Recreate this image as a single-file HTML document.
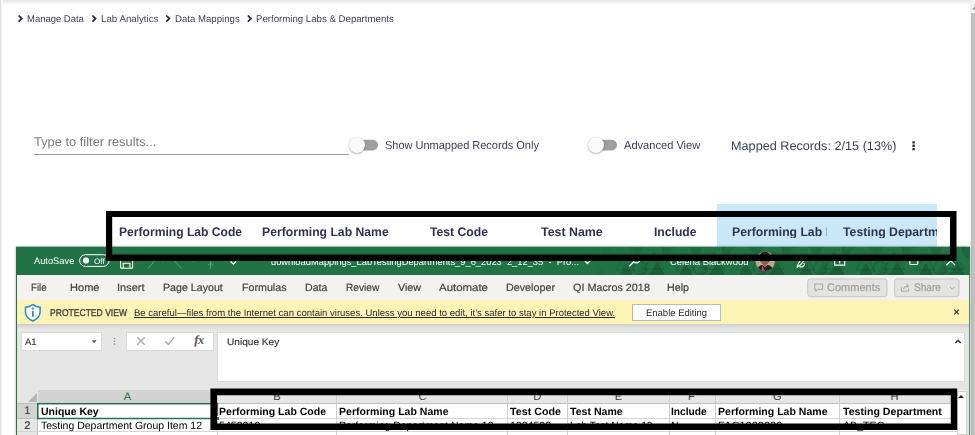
<!DOCTYPE html>
<html lang="en"><head><meta charset="utf-8"><title>Performing Labs &amp; Departments</title>
<style>
*{margin:0;padding:0;box-sizing:border-box}
html,body{width:975px;height:435px;overflow:hidden;background:#fff}
body{position:relative;font-family:"Liberation Sans",sans-serif}
.a{position:absolute}
.t{position:absolute;white-space:pre;transform-origin:0 50%;text-rendering:geometricPrecision;font-family:"Liberation Sans",sans-serif}
svg{position:absolute;overflow:visible}

</style></head>
<body>
<!-- page chrome -->
<div class="a" style="left:0;top:0;width:975px;height:5px;background:linear-gradient(#e4e4e4,#f3f3f3 50%,#fff)"></div>
<div class="a" style="left:0;top:0;width:1px;height:435px;background:#e1e1e1"></div>
<div class="a" style="left:1px;top:0;width:2px;height:435px;background:linear-gradient(90deg,#efefef,#fff)"></div>
<!-- browser scrollbar -->
<div class="a" style="left:970px;top:0;width:5px;height:435px;background:#f1f1f1"></div>
<div class="a" style="left:971px;top:13px;width:4px;height:422px;background:#c1c1c1"></div>
<svg style="left:972px;top:5.500px" width="3" height="4" viewBox="0 0 3 4"><path d="M0 3.500 L3 .5 L3 3.500Z" fill="#8a8a8a"/></svg>

<!-- breadcrumb chevrons -->
<svg style="left:0;top:0" width="400" height="30" viewBox="0 0 400 30" fill="none" stroke="#1f2347" stroke-width="1.7">
  <path d="M18.6 15.500 L21.8 18.600 L18.6 21.700"/>
  <path d="M92.4 15.500 L95.6 18.600 L92.4 21.700"/>
  <path d="M166.2 15.500 L169.4 18.600 L166.2 21.700"/>
  <path d="M247.8 15.500 L251.0 18.600 L247.8 21.700"/>
</svg>

<!-- filter input underline -->
<div class="a" style="left:33.5px;top:154px;width:315.5px;height:1px;background:#9b9b9b"></div>

<!-- toggle 1 -->
<svg style="left:0;top:0" width="975" height="160" viewBox="0 0 975 160"><rect x="355" y="139.800" width="23" height="10.600" rx="5.300" fill="#9e9e9e"/><rect x="594" y="139.800" width="23" height="10.600" rx="5.300" fill="#9e9e9e"/></svg>
<div class="a" style="left:349px;top:137px;width:16px;height:16px;border-radius:50%;background:#fafafa;box-shadow:0 1px 2px rgba(0,0,0,.28),0 0 1px rgba(0,0,0,.18)"></div>
<!-- toggle 2 -->

<div class="a" style="left:588px;top:137px;width:16px;height:16px;border-radius:50%;background:#fafafa;box-shadow:0 1px 2px rgba(0,0,0,.28),0 0 1px rgba(0,0,0,.18)"></div>
<!-- kebab -->
<svg style="left:910px;top:138.600px" width="8" height="14" viewBox="0 0 8 14" fill="#1f2347"><rect x="2.400" y="2.200" width="2.400" height="2.400" rx=".5"/><rect x="2.400" y="5.550" width="2.400" height="2.400" rx=".5"/><rect x="2.400" y="8.900" width="2.400" height="2.400" rx=".5"/></svg>

<!-- selected (light blue) columns -->
<div class="a" style="left:716.5px;top:204px;width:220.5px;height:44px;background:#cbe8f9"></div>

<!-- ================= EXCEL WINDOW ================= -->
<div class="a" style="left:16px;top:246px;width:954px;height:1px;background:rgba(33,115,70,.3)"></div>
<div class="a" style="left:16px;top:247px;width:954px;height:188px;box-shadow:0 0 3px rgba(0,0,0,.3)"></div>
<div class="a" id="xl" style="left:16px;top:247px;width:954px;height:188px;background:#e6e6e6;overflow:hidden">
  <!-- title bar -->
  <div class="a" style="left:0;top:0;width:954px;height:28px;background:#217346"></div>
  <svg style="left:540px;top:0" width="414" height="28" viewBox="0 0 414 28">
    <defs>
      <pattern id="tri" width="60" height="28" patternUnits="userSpaceOnUse">
        <path d="M3 28 L10 16 L17 28Z M33 28 L41 14 L49 28Z" fill="#000" fill-opacity=".17"/>
        <path d="M13 0 L27 0 L20 12Z M45 0 L58 0 L51.500 11Z M20 28 L27 16 L34 28Z" fill="#000" fill-opacity=".08"/>
        <path d="M0 23 L9 7 L18 23Z M28 22 L38 5 L48 22Z" fill="none" stroke="#000" stroke-opacity=".1" stroke-width="1.500"/>
        <circle cx="24" cy="21" r="6.500" fill="none" stroke="#000" stroke-opacity=".09" stroke-width="1.500"/>
        <circle cx="54" cy="4" r="7" fill="none" stroke="#000" stroke-opacity=".09" stroke-width="1.500"/>
      </pattern>
      <linearGradient id="fd" x1="0" x2="1"><stop offset="0" stop-color="#fff" stop-opacity="0"/><stop offset=".08" stop-color="#fff" stop-opacity="0"/><stop offset=".2" stop-color="#fff" stop-opacity="1"/><stop offset="1" stop-color="#fff" stop-opacity="1"/></linearGradient>
      <mask id="mk"><rect width="414" height="28" fill="url(#fd)"/></mask>
    </defs>
    <rect width="414" height="28" fill="url(#tri)" mask="url(#mk)"/>
  </svg>
  <!-- ribbon tab strip -->
  <div class="a" style="left:0;top:28px;width:954px;height:25px;background:#f3f2f1"></div>
  <!-- comments / share buttons -->
  <svg style="left:0;top:0" width="954" height="60" viewBox="0 0 954 60"><rect x="791.800" y="31.900" width="79.200" height="17.800" rx="2.500" fill="#e4e3e1" stroke="#c6c5c3" stroke-width="1"/><rect x="878.700" y="31.900" width="64.300" height="17.800" rx="2.500" fill="#e4e3e1" stroke="#c6c5c3" stroke-width="1"/></svg>
  
  <!-- protected view bar -->
  <div class="a" style="left:0;top:53px;width:954px;height:23.500px;background:#fcf4b4"></div>
  <div class="a" style="left:0;top:76.500px;width:954px;height:5px;background:linear-gradient(#cdcdcd,#e6e6e6)"></div>
  <div class="a" style="left:616.3px;top:57px;width:89.2px;height:16.6px;background:#fff;border:1px solid #b9b9b9"></div>
  <!-- name box -->
  <div class="a" style="left:5px;top:84.5px;width:81px;height:19px;background:#fff;border:1px solid #d9d9d9"></div>
  <!-- fx box -->
  <div class="a" style="left:110.300px;top:84.500px;width:88.200px;height:19px;background:#fff;border:1px solid #d9d9d9"></div>
  <!-- formula box -->
  <div class="a" style="left:200.800px;top:84.500px;width:748.300px;height:50.500px;background:#fff;border:1px solid #dcdcdc"></div>
  <!-- grid -->
  <div class="a" style="left:0;top:143px;width:942px;height:45px;background:#fff"></div>
  <!-- column header strip -->
  <div class="a" style="left:0;top:143px;width:942px;height:14px;background:#e6e6e6;border-bottom:1px solid #bdbdbd"></div>
  <div class="a" style="left:21.7px;top:143px;width:179.3px;height:14px;background:#d3d3d3;border-bottom:1px solid #1e6b41"></div>
  <!-- row headers -->
  <div class="a" style="left:0;top:157px;width:21.7px;height:31px;background:#e6e6e6;border-right:1px solid #bdbdbd"></div>
  <div class="a" style="left:0;top:157px;width:21.7px;height:14.5px;background:#d3d3d3;border-right:1px solid #1e6b41"></div>
  <!-- select-all triangle -->
  <svg style="left:11px;top:146px" width="10" height="9" viewBox="0 0 10 9"><path d="M10 0 L10 9 L1 9Z" fill="#b5b5b5"/></svg>
  <!-- grid lines: horizontal -->
  <div class="a" style="left:21.7px;top:171px;width:920px;height:1px;background:#d4d4d4"></div>
  <div class="a" style="left:0;top:171px;width:21.7px;height:1px;background:#bdbdbd"></div>
  <div class="a" style="left:0;top:184px;width:942px;height:1px;background:#d4d4d4"></div>
  <!-- vertical lines (col boundaries) -->
  <div class="a" style="left:320.4px;top:143.5px;width:1px;height:45px;background:#cfcfcf"></div>
  <div class="a" style="left:491.4px;top:143.5px;width:1px;height:45px;background:#cfcfcf"></div>
  <div class="a" style="left:551.3px;top:143.5px;width:1px;height:45px;background:#cfcfcf"></div>
  <div class="a" style="left:652.5px;top:143.5px;width:1px;height:45px;background:#cfcfcf"></div>
  <div class="a" style="left:699.2px;top:143.5px;width:1px;height:45px;background:#cfcfcf"></div>
  <div class="a" style="left:823.4px;top:143.5px;width:1px;height:45px;background:#cfcfcf"></div>
  <div class="a" style="left:201px;top:171px;width:1px;height:18px;background:#cfcfcf"></div>
  <!-- selected cell A1 -->
  <svg style="left:0;top:0" width="300" height="188" viewBox="0 0 300 188"><rect x="21.800" y="156.700" width="179.600" height="14.800" fill="none" stroke="#21744a" stroke-width="1.500"/></svg>
  <div class="a" style="left:199px;top:169px;width:5px;height:5px;background:#1e6b41;border:1px solid #fff"></div>
  <!-- excel vertical scrollbar -->
  <div class="a" style="left:941.200px;top:143px;width:9.400px;height:45px;background:#f4f4f4"></div><div class="a" style="left:941px;top:144px;width:10px;height:13px;background:#fff;border:1px solid #cfcfcf"></div>
  <div class="a" style="left:941px;top:156px;width:10px;height:32px;background:#fff;border:1px solid #cfcfcf;border-top:0"></div>
  <svg style="left:942.400px;top:148px" width="6" height="3" viewBox="0 0 6 3"><path d="M0 3 L3 0 L6 3Z" fill="#222"/></svg>
  <!-- window borders -->
  <div class="a" style="left:0;top:28px;width:1px;height:160px;background:#217346"></div>
  <div class="a" style="left:953px;top:28px;width:1px;height:160px;background:#4b9068"></div>
</div>

<!-- excel icons layer (page coords) -->
<svg style="left:0;top:0" width="975" height="435" viewBox="0 0 975 435" fill="none">
  <!-- autosave pill -->
  <rect x="79.6" y="254.7" width="29.5" height="11.7" rx="5.85" stroke="#fff" stroke-width="1"/>
  <circle cx="86" cy="260.5" r="3.1" fill="#fff"/>
  <!-- save icon -->
  <path d="M120.600 256 h10 l2 2 v9.200 q0 1 -1 1 h-10 q-1 0 -1 -1z M123.300 268.200 v-5 h6.600 v5" stroke="#fff" stroke-width="1.100"/>
  <!-- faded undo/redo -->
  <path d="M148 268.700 L154.800 260.500 M173.800 260.500 L182 268.700 M210.600 260 V268.700 M208 265.600 l2.600 -2.600 l2.600 2.600" stroke="#5da47e" stroke-width="1"/><circle cx="163" cy="261.300" r=".6" fill="#5da47e"/><circle cx="194" cy="261.300" r=".6" fill="#5da47e"/>
  <!-- qat chevron -->
  <path d="M230.500 261.300 l2.800 2.800 l2.800 -2.800" stroke="#fff" stroke-width="1.300"/>
  <!-- title chevron -->
  <path d="M584.6 260.6 l2.9 2.9 l2.9 -2.9" stroke="#fff" stroke-width="1.3"/>
  <!-- search -->
  <circle cx="636.3" cy="259.3" r="3.6" stroke="#fff" stroke-width="1.1"/><path d="M633.6 262 l-4.4 4.4" stroke="#fff" stroke-width="1.2"/>
  <!-- avatar -->
  <clipPath id="av"><circle cx="765.200" cy="261.300" r="9.700"/></clipPath>
  <g clip-path="url(#av)">
    <rect x="755" y="251" width="21" height="21" fill="#b9a88a"/>
    <ellipse cx="765" cy="257.500" rx="5.600" ry="6" fill="#2b1f1e"/>
    <ellipse cx="765" cy="260.600" rx="3.600" ry="4.300" fill="#8d5d47"/>
    <path d="M756.500 272 q1 -6.500 6 -7 l2.500 2.500 l2.500 -2.500 q5 .5 6.500 7z" fill="#231c22"/>
    <path d="M762.300 265.600 l2.700 5.400 l-4 1.500z" fill="#e0337f"/>
    <path d="M763 265 l2 2.300 l2 -2.300z" fill="#8d5d47"/>
  </g>
  <!-- pen -->
  <path d="M797.200 267.200 q.5 -4.500 6 -9.500 l2.800 -1.200 l-.9 2.900 q-4 5.500 -7.900 7.800z M799.500 266.500 q2.500 1.500 4.500 -1.200 q1.200 -1.500 -.5 -1.800" stroke="#fff" stroke-width="1.100"/>
  <!-- ribbon display -->
  <path d="M834.700 256.500 h10 v8.600 h-10z M834.700 260.500 h10 M839.700 258 v5.500" stroke="#fff" stroke-width="1.100"/>
  <!-- maximize -->
  <rect x="909.800" y="256" width="8" height="8.500" rx="1" stroke="#fff" stroke-width="1.100"/>
  <!-- close -->
  <path d="M946.200 256.300 l9 9 M955.200 256.300 l-9 9" stroke="#fff" stroke-width="1.200"/>
  <!-- comments icon -->
  <path d="M814.800 284 h7.800 v5.300 h-4.800 l-2 2 v-2 h-1z" stroke="#a6a4a2" stroke-width="1"/>
  <!-- share icon -->
  <path d="M901.300 287.300 v3.800 h7.400 v-2.200 M903.300 289.300 q.4 -3.300 4.600 -3.300 M906.300 283.700 l2.300 2.300 l-2.300 2.300" stroke="#a6a4a2" stroke-width="1"/>
  <path d="M950 287 l2.300 2.300 l2.300 -2.300" stroke="#a9a9a9" stroke-width="1"/>
  <!-- shield -->
  <path d="M32.800 304.600 q-3.600 2.400 -7.300 2.700 v5 q.3 5.800 7.300 8.700 q7 -2.900 7.300 -8.700 v-5 q-3.700 -.3 -7.300 -2.700z" stroke="#2b88d8" stroke-width="1.500" fill="#fff"/>
  <circle cx="32.800" cy="308.600" r="1.100" fill="#2b88d8"/><rect x="31.900" y="310.800" width="1.800" height="6" fill="#2b88d8"/>
  <!-- bar close x -->
  <path d="M954.200 309.700 l4.600 4.600 M958.800 309.700 l-4.600 4.600" stroke="#333" stroke-width="1.200"/>
  <!-- name box dropdown -->
  <path d="M91.600 340.300 h5 l-2.500 2.800z" fill="#555"/>
  <!-- splitter dots -->
  <circle cx="114.500" cy="338.500" r=".8" fill="#8c8c8c"/><circle cx="114.500" cy="341.300" r=".8" fill="#8c8c8c"/><circle cx="114.500" cy="344.100" r=".8" fill="#8c8c8c"/>
  <!-- cancel / enter -->
  <path d="M137.300 337.300 l7.400 7.400 M144.700 337.300 l-7.400 7.400" stroke="#a8a8a8" stroke-width="1.300"/>
  <path d="M165.300 341.300 l3 3.200 l6 -7.300" stroke="#a8a8a8" stroke-width="1.300"/>
  <!-- formula expand caret -->
  <path d="M955.300 343 l2.700 -2.800 l2.700 2.800" stroke="#333" stroke-width="1.400"/>
</svg>
<span class="a" style="left:194.200px;top:333px;font:italic 700 12.500px/14px 'Liberation Serif',serif;color:#555;letter-spacing:-.4px;text-rendering:geometricPrecision">fx</span>

<span class="t" style="left:27.30px;top:15px;font-size:9.7px;line-height:9.7px;font-weight:400;color:#3a3e62;transform:scaleX(0.9781);">Manage Data</span>
<span class="t" style="left:101.10px;top:15px;font-size:9.7px;line-height:9.7px;font-weight:400;color:#3a3e62;transform:scaleX(1.0054);">Lab Analytics</span>
<span class="t" style="left:175.00px;top:15px;font-size:9.7px;line-height:9.7px;font-weight:400;color:#3a3e62;transform:scaleX(0.9928);">Data Mappings</span>
<span class="t" style="left:256.40px;top:15px;font-size:9.7px;line-height:9.7px;font-weight:400;color:#3a3e62;transform:scaleX(0.9957);">Performing Labs &amp; Departments</span>
<span class="t" style="left:34.20px;top:136px;font-size:12.6px;line-height:12.6px;font-weight:400;color:#7b7b7b;transform:scaleX(1.0218);">Type to filter results...</span>
<span class="t" style="left:385.10px;top:141px;font-size:11.5px;line-height:11.5px;font-weight:400;color:#3a3e62;transform:scaleX(0.9553);">Show Unmapped Records Only</span>
<span class="t" style="left:623.80px;top:141px;font-size:11.5px;line-height:11.5px;font-weight:400;color:#3a3e62;transform:scaleX(0.9638);">Advanced View</span>
<span class="t" style="left:730.60px;top:140px;font-size:12.5px;line-height:12.5px;font-weight:400;color:#3a3e62;transform:scaleX(1.0130);">Mapped Records: 2/15 (13%)</span>
<span class="t" style="left:118.70px;top:226px;font-size:12.4px;line-height:12.4px;font-weight:700;color:#2d3154;transform:scaleX(0.9763);">Performing Lab Code</span>
<span class="t" style="left:261.80px;top:226px;font-size:12.4px;line-height:12.4px;font-weight:700;color:#2d3154;transform:scaleX(0.9840);">Performing Lab Name</span>
<span class="t" style="left:430.30px;top:226px;font-size:12.4px;line-height:12.4px;font-weight:700;color:#2d3154;transform:scaleX(0.9833);">Test Code</span>
<span class="t" style="left:541.00px;top:226px;font-size:12.4px;line-height:12.4px;font-weight:700;color:#2d3154;transform:scaleX(0.9992);">Test Name</span>
<span class="t" style="left:654.00px;top:226px;font-size:12.4px;line-height:12.4px;font-weight:700;color:#2d3154;transform:scaleX(0.9798);">Include</span>
<span class="t" style="left:731.70px;top:226px;font-size:12.4px;line-height:12.4px;font-weight:700;color:#2d3154;transform:scaleX(0.9840);width:96.24px;overflow:hidden;">Performing Lab Name</span>
<span class="t" style="left:842.50px;top:226px;font-size:12.4px;line-height:12.4px;font-weight:700;color:#2d3154;transform:scaleX(0.9901);width:95.44px;overflow:hidden;">Testing Department</span>
<span class="t" style="left:33.70px;top:257px;font-size:9.5px;line-height:9.5px;font-weight:400;color:#ffffff;transform:scaleX(0.9781);">AutoSave</span>
<span class="t" style="left:94.30px;top:258px;font-size:8px;line-height:8px;font-weight:400;color:#ffffff;transform:scaleX(1.0160);">Off</span>
<span class="t" style="left:270.50px;top:258px;font-size:9.5px;line-height:9.5px;font-weight:400;color:#ffffff;transform:scaleX(0.9818);">downloadMappings_LabTestingDepartments_9_6_2023  2_12_35  -  Pro...</span>
<span class="t" style="left:669.50px;top:258px;font-size:9.5px;line-height:9.5px;font-weight:400;color:#ffffff;transform:scaleX(0.9976);">Celena Blackwood</span>
<span class="t" style="left:30.50px;top:283px;font-size:10.5px;line-height:10.5px;font-weight:400;color:#444444;transform:scaleX(0.9160);-webkit-text-stroke:.2px #444;">File</span>
<span class="t" style="left:69.50px;top:283px;font-size:10.5px;line-height:10.5px;font-weight:400;color:#444444;transform:scaleX(1.0530);-webkit-text-stroke:.2px #444;">Home</span>
<span class="t" style="left:117.00px;top:283px;font-size:10.5px;line-height:10.5px;font-weight:400;color:#444444;transform:scaleX(1.0508);-webkit-text-stroke:.2px #444;">Insert</span>
<span class="t" style="left:163.00px;top:283px;font-size:10.5px;line-height:10.5px;font-weight:400;color:#444444;transform:scaleX(1.0141);-webkit-text-stroke:.2px #444;">Page Layout</span>
<span class="t" style="left:241.50px;top:283px;font-size:10.5px;line-height:10.5px;font-weight:400;color:#444444;transform:scaleX(1.0168);-webkit-text-stroke:.2px #444;">Formulas</span>
<span class="t" style="left:304.60px;top:283px;font-size:10.5px;line-height:10.5px;font-weight:400;color:#444444;transform:scaleX(1.0096);-webkit-text-stroke:.2px #444;">Data</span>
<span class="t" style="left:345.60px;top:283px;font-size:10.5px;line-height:10.5px;font-weight:400;color:#444444;transform:scaleX(0.9699);-webkit-text-stroke:.2px #444;">Review</span>
<span class="t" style="left:398.00px;top:283px;font-size:10.5px;line-height:10.5px;font-weight:400;color:#444444;transform:scaleX(1.0187);-webkit-text-stroke:.2px #444;">View</span>
<span class="t" style="left:439.00px;top:283px;font-size:10.5px;line-height:10.5px;font-weight:400;color:#444444;transform:scaleX(1.0900);-webkit-text-stroke:.2px #444;">Automate</span>
<span class="t" style="left:506.00px;top:283px;font-size:10.5px;line-height:10.5px;font-weight:400;color:#444444;transform:scaleX(1.0235);-webkit-text-stroke:.2px #444;">Developer</span>
<span class="t" style="left:572.60px;top:283px;font-size:10.5px;line-height:10.5px;font-weight:400;color:#444444;transform:scaleX(1.0294);-webkit-text-stroke:.2px #444;">QI Macros 2018</span>
<span class="t" style="left:667.00px;top:283px;font-size:10.5px;line-height:10.5px;font-weight:400;color:#444444;transform:scaleX(1.0181);-webkit-text-stroke:.2px #444;">Help</span>
<span class="t" style="left:827.00px;top:283px;font-size:11px;line-height:11px;font-weight:400;color:#a3a19f;transform:scaleX(1.0002);-webkit-text-stroke:.25px #a3a19f;">Comments</span>
<span class="t" style="left:914.00px;top:283px;font-size:11px;line-height:11px;font-weight:400;color:#a3a19f;transform:scaleX(0.9196);-webkit-text-stroke:.25px #a3a19f;">Share</span>
<span class="t" style="left:49.60px;top:309px;font-size:9.8px;line-height:9.8px;font-weight:400;color:#444;transform:scaleX(0.8731);-webkit-text-stroke:.35px #444;">PROTECTED VIEW</span>
<span class="t" style="left:134.40px;top:309px;font-size:9.6px;line-height:9.6px;font-weight:400;color:#2b2b2b;transform:scaleX(0.9934);text-decoration:underline;text-underline-offset:1px;">Be careful—files from the Internet can contain viruses. Unless you need to edit, it’s safer to stay in Protected View.</span>
<span class="t" style="left:645.60px;top:309px;font-size:9.6px;line-height:9.6px;font-weight:400;color:#2b2b2b;transform:scaleX(0.9875);">Enable Editing</span>
<span class="t" style="left:25.10px;top:338px;font-size:9.5px;line-height:9.5px;font-weight:400;color:#333;transform:scaleX(0.9978);-webkit-text-stroke:.15px #333;">A1</span>
<span class="t" style="left:226.70px;top:338px;font-size:9.5px;line-height:9.5px;font-weight:400;color:#333;transform:scaleX(1.0646);-webkit-text-stroke:.15px #333;">Unique Key</span>
<span class="t" style="left:123.73px;top:392px;font-size:11px;line-height:11px;font-weight:400;color:#1e6b41;transform:scaleX(1.0000);">A</span>
<span class="t" style="left:273.33px;top:392px;font-size:11px;line-height:11px;font-weight:400;color:#3c3c3c;transform:scaleX(1.0000);">B</span>
<span class="t" style="left:418.42px;top:392px;font-size:11px;line-height:11px;font-weight:400;color:#3c3c3c;transform:scaleX(1.0000);">C</span>
<span class="t" style="left:533.32px;top:392px;font-size:11px;line-height:11px;font-weight:400;color:#3c3c3c;transform:scaleX(1.0000);">D</span>
<span class="t" style="left:614.73px;top:392px;font-size:11px;line-height:11px;font-weight:400;color:#3c3c3c;transform:scaleX(1.0000);">E</span>
<span class="t" style="left:687.93px;top:392px;font-size:11px;line-height:11px;font-weight:400;color:#3c3c3c;transform:scaleX(1.0000);">F</span>
<span class="t" style="left:773.02px;top:392px;font-size:11px;line-height:11px;font-weight:400;color:#3c3c3c;transform:scaleX(1.0000);">G</span>
<span class="t" style="left:890.62px;top:392px;font-size:11px;line-height:11px;font-weight:400;color:#3c3c3c;transform:scaleX(1.0000);">H</span>
<span class="t" style="left:24.14px;top:406px;font-size:11px;line-height:11px;font-weight:400;color:#2a4a38;transform:scaleX(1.0000);-webkit-text-stroke:.15px #2a4a38;">1</span>
<span class="t" style="left:24.14px;top:421px;font-size:11px;line-height:11px;font-weight:400;color:#333;transform:scaleX(1.0000);-webkit-text-stroke:.15px #333;">2</span>
<span class="t" style="left:40.80px;top:407px;font-size:10.5px;line-height:10.5px;font-weight:700;color:#000000;transform:scaleX(0.9989);">Unique Key</span>
<span class="t" style="left:40.80px;top:421px;font-size:10.5px;line-height:10.5px;font-weight:400;color:#000000;transform:scaleX(0.9994);">Testing Department Group Item 12</span>
<span class="t" style="left:219.20px;top:407px;font-size:10.5px;line-height:10.5px;font-weight:700;color:#000000;transform:scaleX(1.0031);">Performing Lab Code</span>
<span class="t" style="left:339.00px;top:407px;font-size:10.5px;line-height:10.5px;font-weight:700;color:#000000;transform:scaleX(1.0036);">Performing Lab Name</span>
<span class="t" style="left:510.00px;top:407px;font-size:10.5px;line-height:10.5px;font-weight:700;color:#000000;transform:scaleX(1.0203);">Test Code</span>
<span class="t" style="left:570.00px;top:407px;font-size:10.5px;line-height:10.5px;font-weight:700;color:#000000;transform:scaleX(1.0071);">Test Name</span>
<span class="t" style="left:671.00px;top:407px;font-size:10.5px;line-height:10.5px;font-weight:700;color:#000000;transform:scaleX(0.9710);">Include</span>
<span class="t" style="left:717.70px;top:407px;font-size:10.5px;line-height:10.5px;font-weight:700;color:#000000;transform:scaleX(1.0036);">Performing Lab Name</span>
<span class="t" style="left:842.60px;top:407px;font-size:10.5px;line-height:10.5px;font-weight:700;color:#000000;transform:scaleX(1.0099);">Testing Department</span>
<span class="t" style="left:219.20px;top:421px;font-size:10.5px;line-height:10.5px;font-weight:400;color:#000000;transform:scaleX(1.0100);">5450010</span>
<span class="t" style="left:339.00px;top:421px;font-size:10.5px;line-height:10.5px;font-weight:400;color:#000000;transform:scaleX(0.9990);">Performing Department Name 12</span>
<span class="t" style="left:510.00px;top:421px;font-size:10.5px;line-height:10.5px;font-weight:400;color:#000000;transform:scaleX(1.0027);">1234500</span>
<span class="t" style="left:570.00px;top:421px;font-size:10.5px;line-height:10.5px;font-weight:400;color:#000000;transform:scaleX(0.9702);">Lab Test Name 12</span>
<span class="t" style="left:670.95px;top:421px;font-size:10.5px;line-height:10.5px;font-weight:400;color:#000000;transform:scaleX(1.0000);">N</span>
<span class="t" style="left:717.70px;top:421px;font-size:10.5px;line-height:10.5px;font-weight:400;color:#000000;transform:scaleX(1.0487);">FAC1000000</span>
<span class="t" style="left:842.60px;top:421px;font-size:10.5px;line-height:10.5px;font-weight:400;color:#000000;transform:scaleX(1.0132);">AB_TEC</span>

<!-- annotation boxes -->
<svg style="left:0;top:0" width="975" height="435" viewBox="0 0 975 435">
  <path fill="#000" fill-rule="evenodd" d="M106 211 H956.500 V261.100 H106Z M112.200 216.900 V254.400 H950 V216.900Z"/>
  <path fill="#000" fill-rule="evenodd" d="M210.400 388.400 H957.200 V429.900 H210.400Z M217.100 395.200 V423.600 H950.800 V395.200Z"/>
</svg>

</body></html>
